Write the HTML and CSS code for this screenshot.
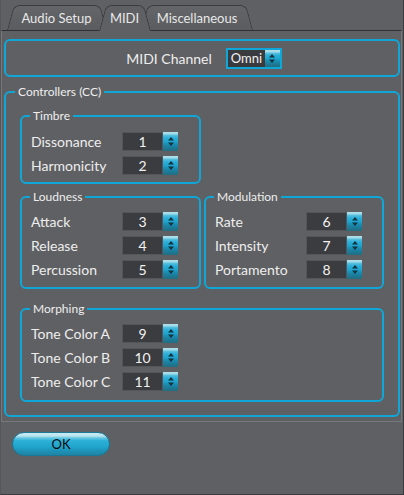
FILE: index.html
```html
<!DOCTYPE html>
<html lang="en">
<head>
<meta charset="utf-8">
<title>MIDI Settings</title>
<link rel="stylesheet" href="styles.css">
</head>
<body>
<div class="window">
  <div class="tabs">
    <div class="tab tab-audio">Audio Setup</div>
    <div class="tab tab-midi active">MIDI</div>
    <div class="tab tab-misc">Miscellaneous</div>
  </div>
  <div class="panel">
    <div class="channel">
      <span class="channel-label">MIDI Channel</span>
      <div class="combo">
        <span class="combo-field">Omni</span>
        <span class="arrows"><svg width="6" height="9" viewBox="0 0 6 9"><polygon points="0,3.5 3,0 6,3.5"/><polygon points="0,5.5 6,5.5 3,9"/></svg></span>
      </div>
    </div>
    <fieldset class="group outer">
      <legend>Controllers (CC)</legend>
      <div class="cc">
        <fieldset class="group timbre">
          <legend>Timbre</legend>
          <div class="rows">
            <span class="lbl">Dissonance</span>
            <div class="spin"><span class="val">1</span><span class="arrows"><svg width="6" height="9" viewBox="0 0 6 9"><polygon points="0,3.5 3,0 6,3.5"/><polygon points="0,5.5 6,5.5 3,9"/></svg></span></div>
            <span class="lbl">Harmonicity</span>
            <div class="spin"><span class="val">2</span><span class="arrows"><svg width="6" height="9" viewBox="0 0 6 9"><polygon points="0,3.5 3,0 6,3.5"/><polygon points="0,5.5 6,5.5 3,9"/></svg></span></div>
          </div>
        </fieldset>
        <fieldset class="group loud">
          <legend>Loudness</legend>
          <div class="rows">
            <span class="lbl">Attack</span>
            <div class="spin"><span class="val">3</span><span class="arrows"><svg width="6" height="9" viewBox="0 0 6 9"><polygon points="0,3.5 3,0 6,3.5"/><polygon points="0,5.5 6,5.5 3,9"/></svg></span></div>
            <span class="lbl">Release</span>
            <div class="spin"><span class="val">4</span><span class="arrows"><svg width="6" height="9" viewBox="0 0 6 9"><polygon points="0,3.5 3,0 6,3.5"/><polygon points="0,5.5 6,5.5 3,9"/></svg></span></div>
            <span class="lbl">Percussion</span>
            <div class="spin"><span class="val">5</span><span class="arrows"><svg width="6" height="9" viewBox="0 0 6 9"><polygon points="0,3.5 3,0 6,3.5"/><polygon points="0,5.5 6,5.5 3,9"/></svg></span></div>
          </div>
        </fieldset>
        <fieldset class="group mod">
          <legend>Modulation</legend>
          <div class="rows">
            <span class="lbl">Rate</span>
            <div class="spin"><span class="val">6</span><span class="arrows"><svg width="6" height="9" viewBox="0 0 6 9"><polygon points="0,3.5 3,0 6,3.5"/><polygon points="0,5.5 6,5.5 3,9"/></svg></span></div>
            <span class="lbl">Intensity</span>
            <div class="spin"><span class="val">7</span><span class="arrows"><svg width="6" height="9" viewBox="0 0 6 9"><polygon points="0,3.5 3,0 6,3.5"/><polygon points="0,5.5 6,5.5 3,9"/></svg></span></div>
            <span class="lbl">Portamento</span>
            <div class="spin"><span class="val">8</span><span class="arrows"><svg width="6" height="9" viewBox="0 0 6 9"><polygon points="0,3.5 3,0 6,3.5"/><polygon points="0,5.5 6,5.5 3,9"/></svg></span></div>
          </div>
        </fieldset>
        <fieldset class="group morph">
          <legend>Morphing</legend>
          <div class="rows">
            <span class="lbl">Tone Color A</span>
            <div class="spin"><span class="val">9</span><span class="arrows"><svg width="6" height="9" viewBox="0 0 6 9"><polygon points="0,3.5 3,0 6,3.5"/><polygon points="0,5.5 6,5.5 3,9"/></svg></span></div>
            <span class="lbl">Tone Color B</span>
            <div class="spin"><span class="val">10</span><span class="arrows"><svg width="6" height="9" viewBox="0 0 6 9"><polygon points="0,3.5 3,0 6,3.5"/><polygon points="0,5.5 6,5.5 3,9"/></svg></span></div>
            <span class="lbl">Tone Color C</span>
            <div class="spin"><span class="val">11</span><span class="arrows"><svg width="6" height="9" viewBox="0 0 6 9"><polygon points="0,3.5 3,0 6,3.5"/><polygon points="0,5.5 6,5.5 3,9"/></svg></span></div>
          </div>
        </fieldset>
      </div>
    </fieldset>
  </div>
  <div class="footer">
    <button class="ok" type="button">OK</button>
  </div>
</div>
</body>
</html>
```
FILE: styles.css
```css
* { box-sizing: border-box; }
html, body { margin: 0; padding: 0; }
body {
  width: 404px;
  height: 495px;
  overflow: hidden;
  background: #5f6063;
  font-family: Lato, "Noto Sans", sans-serif;
  color: #eeeeee;
}
.window {
  height: 495px;
  border-left: 1px solid #55565a;
  border-right: 1px solid #3a3b3d;
  border-bottom: 1px solid #3a3b3d;
}

/* tabs */
.tabs {
  position: relative;
  z-index: 1;
  display: flex;
  height: 30px;
  padding: 5px 0 0 6px;
}
.tab {
  position: relative;
  z-index: 1;
  height: 25px;
  font-size: 13px;
  line-height: 26px;
  text-align: center;
  color: #e8e8e8;
}
.tab-audio { width: 99px; }
.tab-midi { width: 51px; margin-left: -7px; }
.tab-misc { width: 112px; margin-left: -9px; }
.tab.active { z-index: 3; }
.tab::before,
.tab::after {
  content: "";
  position: absolute;
  top: 0;
  bottom: 0;
  z-index: -1;
  background: linear-gradient(#646568, #5b5c5f);
  border-top: 1px solid #3a3b3e;
  transform-origin: bottom;
}
.tab::before {
  left: 0;
  right: 50%;
  border-left: 1px solid #3a3b3e;
  border-radius: 6px 0 0 0;
  transform: skewX(-15deg);
}
.tab::after {
  left: 50%;
  right: 0;
  border-right: 1px solid #3a3b3e;
  border-radius: 0 6px 0 0;
  transform: skewX(15deg);
}
.tab.active::before,
.tab.active::after {
  bottom: -1px;
  background: #5f6063;
}

/* panel */
.panel {
  margin-right: 1px;
  padding: 8px 0 4px 0;
  border: 1px solid #76777a;
  border-top-color: #2f3032;
}
.channel {
  height: 38px;
  margin: 0 1px 0 2px;
  border: 2px solid #0fa7d7;
  border-radius: 6px;
  display: flex;
  align-items: center;
  justify-content: center;
  gap: 14px;
  padding-left: 4px;
}
.channel-label { font-size: 14px; }

.combo {
  display: flex;
  height: 21px;
  border: 2px solid #0fa7d7;
}
.combo-field {
  width: 37px;
  background: #3a3b3e;
  font-size: 13px;
  line-height: 17px;
  padding-left: 3px;
  color: #f2f2f2;
  white-space: nowrap;
  overflow: hidden;
}

.arrows {
  width: 15px;
  display: flex;
  align-items: center;
  justify-content: center;
  background: linear-gradient(#b0dfec 0, #a3d9e8 2px, #5cc3e1 3px, #2db0d8 30%, #1fa5cf 50%, #1990b6 62%, #1c7f9e 78%, #236c82 100%);
}
.arrows svg { fill: #16323d; display: block; }

/* group boxes */
.group {
  margin: 0;
  min-width: 0;
  border: 2px solid #0fa7d7;
  border-radius: 6px;
}
.group legend {
  font-size: 12px;
  line-height: 14px;
  padding: 0 3px;
  color: #eeeeee;
}
.outer {
  margin: 8px 1px 0 2px;
  padding: 10px 13px 13px 14px;
}
.outer > legend { margin-left: -5px; }

.cc {
  display: grid;
  grid-template-columns: 181px 180px;
  column-gap: 3px;
}
.cc .group {
  padding: 9px 0 7px 9px;
}
.cc .group > legend { margin-left: -1px; }
.cc .timbre { grid-column: 1; grid-row: 1; }
.cc .loud { grid-column: 1; grid-row: 2; margin-top: 6px; padding-top: 8px; padding-bottom: 8px; }
.cc .mod { grid-column: 2; grid-row: 2; margin-top: 6px; padding-top: 8px; padding-bottom: 8px; }
.cc .morph { grid-column: 1 / 3; grid-row: 3; margin-top: 13px; padding-top: 8px; padding-bottom: 9px; }

.rows {
  display: grid;
  grid-template-columns: 91px 56px;
  row-gap: 5px;
  align-items: center;
}
.lbl {
  font-size: 14px;
  line-height: 19px;
  white-space: nowrap;
}
.spin {
  display: flex;
  height: 19px;
}
.val {
  width: 41px;
  background: #3b3c3f;
  border: 1px solid #55565a;
  text-align: center;
  font-size: 14px;
  line-height: 17px;
  color: #f2f2f2;
}

/* footer */
.footer {
  padding: 10px 0 0 11px;
}
.ok {
  display: block;
  width: 98px;
  height: 24px;
  margin: 0;
  padding: 0;
  border: 1px solid #1a7795;
  border-radius: 12px;
  background: linear-gradient(#cdebf3 0, #b9e3ee 3px, #62c6e2 5px, #2cb0d7 35%, #22a5cd 62%, #1d93b8 80%, #1f84a5 100%);
  font-family: Lato, "Noto Sans", sans-serif;
  font-size: 13px;
  color: #0a0a0a;
}
```
